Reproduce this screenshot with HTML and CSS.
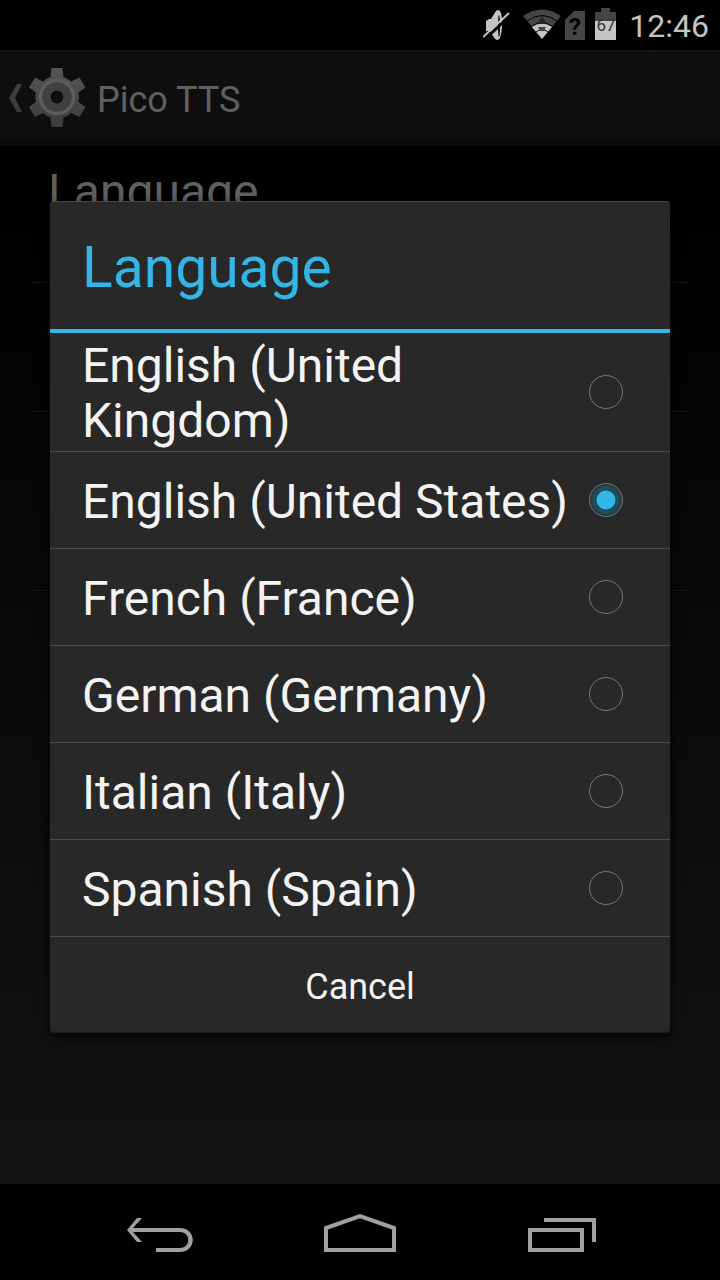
FILE: index.html
```html
<!DOCTYPE html>
<html lang="en">
<head>
    <meta charset="UTF-8">
    <meta name="viewport" content="width=device-width, initial-scale=1.0">
    <title>Pico TTS</title>
    <link rel="stylesheet" href="styles.css">
</head>
<body>
    <header class="status-bar">
        <svg width="40" height="50" viewBox="0 0 40 50" aria-label="Muted">
            <path d="M3 21 L6 19 H8 L13 11 Q16 8 18 13 Q21 25 17 38 Q14 43 10 36 L7 31 H3 Z" fill="#c4c4c4"/>
            <ellipse cx="16" cy="26" rx="1" ry="11" fill="#000"/>
            <path d="M2 39 L28 15" stroke="#000" stroke-width="3"/>
            <path d="M0 37 L26 13" stroke="#c4c4c4" stroke-width="2"/>
        </svg>
        <svg width="42" height="50" viewBox="0 0 42 50" aria-label="Wi-Fi">
            <path d="M0 16 Q19 3 38 16 L19 39 Z" fill="#454545"/>
            <path d="M9 27 Q19 20 29 27 L19 39 Z" fill="#c4c4c4"/>
            <path d="M4 21 Q19 10 34 21" stroke="#000" stroke-width="1" fill="none"/>
            <path d="M9 26 Q19 19 29 26" stroke="#000" stroke-width="1" fill="none"/>
            <path d="M13 32 Q19 27 25 32" stroke="#111" stroke-width="1" fill="none"/>
            <path d="M19 15 L23 24 H15 Z" fill="#262626"/>
            <path d="M15 27 H23 L21 31 H17 Z" fill="#454545"/>
        </svg>
        <svg width="30" height="50" viewBox="0 0 30 50" aria-label="No signal">
            <path d="M0 20 L9 11 H20 V40 H0 Z" fill="#454545"/>
            <text x="10" y="35" class="sim-mark">?</text>
        </svg>
        <svg width="34" height="50" viewBox="0 0 34 50" aria-label="Battery">
            <path d="M0 12 H6 V8 H15 V12 H21 V21 H0 Z" fill="#454545"/>
            <path d="M0 21 H21 V40 H0 Z" fill="#c4c4c4"/>
            <text x="11" y="31" class="battery-level">67</text>
        </svg>
        <span class="clock">12:46</span>
    </header>

    <main class="screen">
        <div class="action-bar">
            <a href="#" class="up" aria-label="Back to settings">
                <svg width="90" height="92" viewBox="0 50 90 92">
                    <defs>
                        <linearGradient id="gearFill" x1="0" y1="0" x2="0" y2="1">
                            <stop offset="0" stop-color="#565656"/>
                            <stop offset="1" stop-color="#3b3b3b"/>
                        </linearGradient>
                        <mask id="gearHole">
                            <rect x="0" y="50" width="90" height="92" fill="#fff"/>
                            <circle cx="57" cy="95" r="6.500" fill="#000"/>
                        </mask>
                    </defs>
                    <path d="M17 82 H22 L15 96 L22 110 H17 L9 96 Z" fill="#3c3c3c"/>
                    <g mask="url(#gearHole)">
                        <path fill="url(#gearFill)" d="M51.500 66 H62.500 L63.500 75 Q67.500 76 71 79.500 L79.500 75.500 L85.500 85.500 L78.500 90.500 Q79.500 95.500 78.500 100 L85.500 105 L79.500 115 L71 111 Q67.500 114.500 63.500 115.500 L62.500 125 H51.500 L50.500 115.500 Q46.500 114.500 43 111 L35 115 L29 105 L36 100 Q34.500 95.500 36 90.500 L29 85.500 L35 75.500 L43 79.500 Q46.500 76 50.500 75 Z"/>
                        <circle cx="57" cy="95" r="16.500" fill="#404040" stroke="#5c5c5c" stroke-width="3.500"/>
                    </g>
                </svg>
            </a>
            <h1>Pico TTS</h1>
        </div>
        <ul class="preferences">
            <li class="preference">Language</li>
            <li class="preference"></li>
            <li class="preference tall"></li>
        </ul>

        <div class="overlay">
            <form class="dialog" role="dialog" aria-labelledby="dialogTitle">
                <h2 id="dialogTitle">Language</h2>
                <label class="option">
                    <span>English (United Kingdom)</span>
                    <input type="radio" name="language" value="en-GB">
                </label>
                <label class="option">
                    <span>English (United States)</span>
                    <input type="radio" name="language" value="en-US" checked>
                </label>
                <label class="option">
                    <span>French (France)</span>
                    <input type="radio" name="language" value="fr-FR">
                </label>
                <label class="option">
                    <span>German (Germany)</span>
                    <input type="radio" name="language" value="de-DE">
                </label>
                <label class="option">
                    <span>Italian (Italy)</span>
                    <input type="radio" name="language" value="it-IT">
                </label>
                <label class="option">
                    <span>Spanish (Spain)</span>
                    <input type="radio" name="language" value="es-ES">
                </label>
                <button type="button" class="cancel-button">Cancel</button>
            </form>
        </div>
    </main>

    <nav class="nav-bar">
        <button type="button" aria-label="Back">
            <svg width="80" height="48" viewBox="120 1208 80 48">
                <path d="M137 1218 H142 L133 1228 H180 C197 1228 197 1252 180 1252 H156 V1248 H180 C191 1248 191 1232 180 1232 H133 L142 1242 H137 L127 1230 Z" class="solid"/>
            </svg>
        </button>
        <button type="button" aria-label="Home">
            <svg width="80" height="48" viewBox="320 1208 80 48">
                <path d="M326 1250 V1228 L360 1216 L394 1228 V1250 Z" stroke-width="4"/>
            </svg>
        </button>
        <button type="button" aria-label="Recent apps">
            <svg width="80" height="48" viewBox="520 1208 80 48">
                <path d="M530 1230 H582 V1250 H530 Z M544 1220 H594 V1242" stroke-width="4"/>
            </svg>
        </button>
    </nav>
</body>
</html>
```

FILE: styles.css
```css
* {
    box-sizing: border-box;
}

body {
    margin: 0;
    min-height: 100vh;
    display: flex;
    flex-direction: column;
    background-color: #000;
    color: #f3f3f3;
    font-family: Roboto, sans-serif;
}

h1,
h2 {
    margin: 0;
    font-weight: normal;
}

svg {
    display: block;
}

button {
    padding: 0;
    border: none;
    background: none;
    color: inherit;
    font-family: inherit;
    cursor: pointer;
}

/* Status bar */
.status-bar {
    height: 50px;
    padding-right: 11px;
    display: flex;
    justify-content: flex-end;
    align-items: center;
}

.clock {
    padding-top: 2px;
    color: #c4c4c4;
    font-size: 32px;
}

.sim-mark {
    font-size: 24px;
    font-weight: bold;
    text-anchor: middle;
}

.battery-level {
    font-size: 17px;
    fill: #333;
    text-anchor: middle;
}

/* Settings page behind the dialog */
.screen {
    position: relative;
    flex: 1;
    display: flex;
    flex-direction: column;
    background: linear-gradient(#000 10%, #111315);
}

.action-bar {
    height: 96px;
    padding-top: 2px;
    display: flex;
    align-items: center;
    background-color: #0e0e0e;
    border-top: 2px solid #161616;
    border-bottom: 4px solid #0a0a0a;
}

.action-bar h1 {
    padding: 4px 0 0 7px;
    color: #606060;
    font-size: 36px;
}

.preferences {
    margin: 0;
    padding: 0 32px;
    list-style: none;
}

.preference {
    height: 129px;
    padding: 18px 16px;
    border-bottom: 1px solid #141516;
    color: #606060;
    font-size: 48px;
    line-height: 55px;
}

.preference:first-child {
    height: 137px;
}

.preference.tall {
    height: 179px;
}

/* Dialog */
.overlay {
    position: absolute;
    top: 0;
    right: 0;
    bottom: 0;
    left: 0;
    padding: 0 50px;
    display: flex;
    align-items: center;
}

.dialog {
    width: 100%;
    display: flex;
    flex-direction: column;
    background-color: #282828;
    border-top: 1px solid #474747;
    border-bottom: 1px solid #1c1c1c;
    border-radius: 4px;
    box-shadow: 0 4px 12px rgba(0, 0, 0, 0.7);
}

.dialog h2 {
    padding: 32px 32px 28px;
    border-bottom: 4px solid #33b5e5;
    color: #33b5e5;
    font-size: 57px;
    line-height: 67px;
}

.option {
    min-height: 97px;
    padding: 3px 47px 3px 32px;
    display: flex;
    align-items: center;
    justify-content: space-between;
    gap: 16px;
    border-bottom: 1px solid #4a4a4a;
    font-size: 48px;
    line-height: 55px;
    cursor: pointer;
}

.option span {
    padding-top: 2px;
}

.option input {
    flex: none;
    width: 34px;
    height: 34px;
    margin: 0;
    appearance: none;
    border: 1px solid #757575;
    border-radius: 50%;
}

.option input:checked {
    background: radial-gradient(circle, #33b5e5 9px, #163a48 10px, #235468 11px, #28363c 16px);
}

.cancel-button {
    height: 95px;
    padding-top: 4px;
    font-size: 36px;
}

/* Navigation bar */
.nav-bar {
    height: 96px;
    padding: 0 60px;
    display: flex;
    justify-content: center;
    align-items: center;
    gap: 120px;
}

.nav-bar path {
    fill: none;
    stroke: #a0a0a0;
}

.nav-bar .solid {
    fill: #a0a0a0;
    stroke: none;
}
```
